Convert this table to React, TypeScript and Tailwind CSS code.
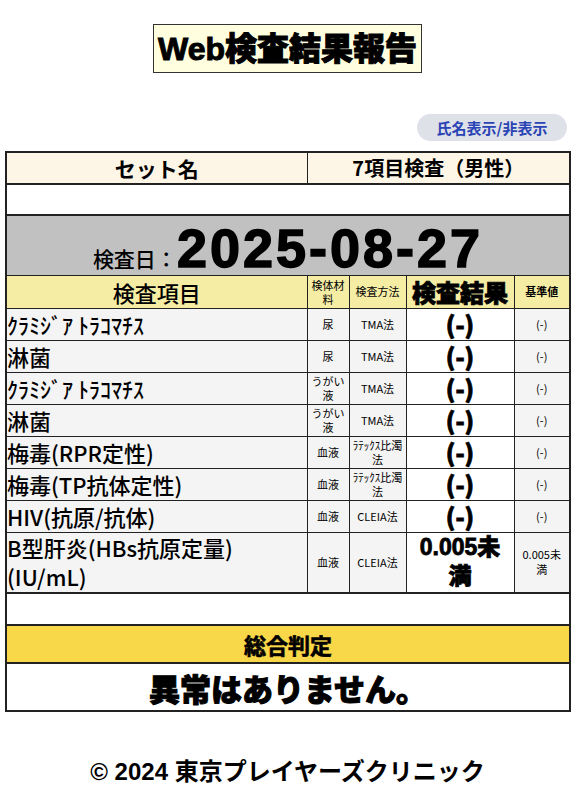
import React from "react";

const jp = { fontFamily: '"Noto Sans CJK JP", "Noto Sans", sans-serif' };
const latinHeavy = { fontFamily: '"Liberation Sans", "Noto Sans CJK JP", sans-serif' };

type Row = {
  item: React.ReactNode;
  mat: React.ReactNode;
  method: React.ReactNode;
  result: React.ReactNode;
  base: React.ReactNode;
  tall?: boolean;
};

const rows: Row[] = [
  { item: "ｸﾗﾐｼﾞｱ ﾄﾗｺﾏﾁｽ", mat: "尿", method: "TMA法", result: "(-)", base: "(-)" },
  { item: "淋菌", mat: "尿", method: "TMA法", result: "(-)", base: "(-)" },
  { item: "ｸﾗﾐｼﾞｱ ﾄﾗｺﾏﾁｽ", mat: "うがい液", method: "TMA法", result: "(-)", base: "(-)" },
  { item: "淋菌", mat: "うがい液", method: "TMA法", result: "(-)", base: "(-)" },
  { item: "梅毒(RPR定性)", mat: "血液", method: "ﾗﾃｯｸｽ比濁法", result: "(-)", base: "(-)" },
  { item: "梅毒(TP抗体定性)", mat: "血液", method: "ﾗﾃｯｸｽ比濁法", result: "(-)", base: "(-)" },
  { item: "HIV(抗原/抗体)", mat: "血液", method: "CLEIA法", result: "(-)", base: "(-)" },
  {
    item: (
      <>
        B型肝炎(HBs抗原定量)
        <br />
        (IU/mL)
      </>
    ),
    mat: "血液",
    method: "CLEIA法",
    result: (
      <>
        0.005未
        <br />満
      </>
    ),
    base: (
      <>
        0.005未
        <br />満
      </>
    ),
    tall: true,
  },
];

export default function App() {
  return (
    <div className="w-[575px] min-h-[800px] bg-white text-black leading-none" style={jp}>
      <div className="flex justify-center pt-[24px]">
        <div className="h-[49px] w-[269px] border border-[#333] bg-[#ffffe0] flex items-center justify-center">
          <span
            className="text-[32px] font-black leading-none [-webkit-text-stroke:1px_black]"
            style={latinHeavy}
          >
            Web検査結果報告
          </span>
        </div>
      </div>
      <div className="flex justify-end pr-[8px] mt-[41px]">
        <div className="h-[27px] w-[150px] rounded-full bg-[#dfe1e8] flex items-center justify-center text-[15px] font-bold text-[#2a44b5] leading-none">
          氏名表示/非表示
        </div>
      </div>
      <div className="px-[5px] mt-[10px]">
        <table className="w-[564px] table-fixed border-collapse border-2 border-[#222]">
          <colgroup>
            <col className="w-[301px]" />
            <col className="w-[42px]" />
            <col className="w-[57px]" />
            <col className="w-[108px]" />
            <col className="w-[56px]" />
          </colgroup>
          <tbody>
            <tr className="h-[32px] bg-[#fdf6e7]">
              <td className="border border-[#222] text-center text-[21px] font-bold leading-none p-0">セット名</td>
              <td colSpan={4} className="border border-[#222] text-center text-[20px] font-bold leading-none p-0">
                7項目検査（男性）
              </td>
            </tr>
            <tr className="h-[31px] bg-white">
              <td colSpan={5} className="border-2 border-[#222] p-0"></td>
            </tr>
            <tr className="h-[60px] bg-[#c1c1c1]">
              <td colSpan={5} className="border border-[#222] p-0 leading-none">
                <div className="h-[55px] flex items-baseline justify-center pt-[3px]">
                  <span className="text-[21px] font-medium leading-none">検査日：</span>
                  <span
                    className="text-[54px] font-black leading-none tracking-[3px] [-webkit-text-stroke:1.5px_black]"
                    style={latinHeavy}
                  >
                    2025-08-27
                  </span>
                </div>
              </td>
            </tr>
            <tr className="h-[33px] bg-[#f6eda5]">
              <td className="border border-[#222] text-center text-[22px] font-medium leading-none p-0">検査項目</td>
              <td className="border border-[#222] text-center text-[11px] leading-[14px] px-[2px] py-0">検体材料</td>
              <td className="border border-[#222] text-center text-[11px] leading-none p-0">検査方法</td>
              <td className="border border-[#222] text-center text-[24px] font-black leading-none p-0 [-webkit-text-stroke:0.8px_black]">
                検査結果
              </td>
              <td className="border border-[#222] text-center text-[11px] font-bold leading-none p-0">基準値</td>
            </tr>
            {rows.map((r, i) => (
              <tr key={i} className={r.tall ? "h-[61px]" : "h-[32px]"}>
                <td
                  className={
                    "border border-[#222] bg-[#f4f4f4] text-left text-[22px] font-medium p-0 " +
                    (r.tall ? "leading-[29px]" : "leading-none")
                  }
                >
                  {r.item}
                </td>
                <td className="border border-[#222] bg-[#f4f4f4] text-center text-[11px] leading-[14px] px-[3px] py-0">
                  {r.mat}
                </td>
                <td className="border border-[#222] bg-[#f4f4f4] text-center text-[11px] leading-[14px] px-[2px] py-0">
                  {r.method}
                </td>
                <td
                  className={
                    "border border-[#222] bg-white text-center font-black p-0 [-webkit-text-stroke:0.8px_black] " +
                    (r.tall ? "text-[23px] leading-[29px]" : "text-[24px] leading-none")
                  }
                  style={r.tall ? latinHeavy : undefined}
                >
                  {r.result}
                </td>
                <td className="border border-[#222] bg-[#f4f4f4] text-center text-[11px] leading-[15px] px-[2px] py-0">
                  {r.base}
                </td>
              </tr>
            ))}
            <tr className="h-[32px] bg-white">
              <td colSpan={5} className="border-2 border-[#222] p-0"></td>
            </tr>
            <tr className="h-[38px] bg-[#f8d748]">
              <td
                colSpan={5}
                className="border-2 border-[#222] text-center text-[22px] font-bold leading-none p-0 [-webkit-text-stroke:0.6px_black]"
              >
                総合判定
              </td>
            </tr>
            <tr className="h-[48px] bg-white">
              <td
                colSpan={5}
                className="border border-[#222] text-center text-[31px] font-black leading-none p-0 [-webkit-text-stroke:1px_black]"
              >
                異常はありません。
              </td>
            </tr>
          </tbody>
        </table>
      </div>
      <div className="mt-[46px] text-center text-[24px] font-semibold leading-none">
        <span style={latinHeavy} className="font-bold">© 2024 </span>東京プレイヤーズクリニック
      </div>
    </div>
  );
}
